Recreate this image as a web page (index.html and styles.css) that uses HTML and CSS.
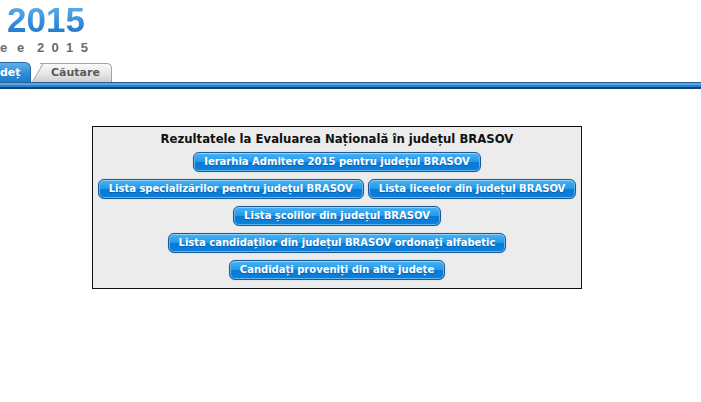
FILE: index.html
```html
<!DOCTYPE html>
<html lang="ro">
<head>
<meta charset="utf-8">
<title>Evaluare Națională 2015</title>
<link rel="stylesheet" href="styles.css">
</head>
<body>
<header class="masthead">
  <div class="year">2015</div>
  <div class="sub"><span class="sub-a">ee</span><span class="sub-b">2015</span></div>
</header>
<nav class="tabs">
  <a class="tab tab-active">deț</a>
  <a class="tab tab-inactive"><span class="tab-label">Căutare</span></a>
</nav>
<div class="tabbar"></div>
<main class="panel">
  <div class="panel-title">Rezultatele la Evaluarea Națională în județul BRASOV</div>
  <div class="rows">
    <div class="row"><a class="btn">Ierarhia Admitere 2015 pentru județul BRASOV</a></div>
    <div class="row"><a class="btn">Lista specializărilor pentru județul BRASOV</a><a class="btn">Lista liceelor din județul BRASOV</a></div>
    <div class="row"><a class="btn">Lista școlilor din județul BRASOV</a></div>
    <div class="row"><a class="btn">Lista candidaților din județul BRASOV ordonați alfabetic</a></div>
    <div class="row"><a class="btn">Candidați proveniți din alte județe</a></div>
  </div>
</main>
</body>
</html>
```

FILE: styles.css
```css
html, body {
  margin: 0;
  padding: 0;
  background: #ffffff;
}
body {
  font-family: "DejaVu Sans", Verdana, sans-serif;
  width: 701px;
  overflow: hidden;
}
.masthead {
  padding-left: 7px;
}
.year {
  font-family: "Liberation Sans", Arial, sans-serif;
  font-weight: bold;
  font-size: 35px;
  line-height: normal;
  padding-right: 4px;
  background: linear-gradient(#6fb8ee, #2f8ad8 60%, #1a70c4);
  -webkit-background-clip: text;
  background-clip: text;
  color: transparent;
  width: max-content;
}
.sub {
  font-family: "Liberation Sans", Arial, sans-serif;
  font-weight: bold;
  font-size: 13px;
  line-height: normal;
  color: #6b6b6b;
  margin-left: -7px;
  display: flex;
}
.sub-a {
  letter-spacing: 9.8px;
}
.sub-b {
  margin-left: 3px;
  letter-spacing: 7.3px;
}
.tabs {
  display: flex;
  align-items: flex-end;
  margin-top: 7px;
  height: 20px;
}
.tab {
  font-size: 11px;
  font-weight: bold;
  text-decoration: none;
  box-sizing: border-box;
}
.tab-active {
  width: 31px;
  height: 20px;
  line-height: 19px;
  color: #ffffff;
  background: linear-gradient(#5db0ee, #2b8ad8 60%, #1e7ccc);
  border-top: 1px solid #2468a8;
  border-right: 1px solid #2468a8;
  border-radius: 0 6px 0 0;
  padding-left: 0;
}
.tab-inactive {
  position: relative;
  margin-left: 9px;
  width: 72px;
  height: 19px;
  line-height: 18px;
  padding-left: 11px;
  color: #5a5a5a;
  background: linear-gradient(#fafafa, #e6e6e6 55%, #cfcfcf);
  border-top: 1px solid #a3a3a3;
  border-right: 1px solid #a3a3a3;
  border-radius: 0 5px 0 0;
}
.tab-inactive::before {
  content: "";
  position: absolute;
  left: -8px;
  top: -1px;
  bottom: 0;
  width: 16px;
  background: linear-gradient(#fafafa, #e6e6e6 55%, #cfcfcf);
  border-left: 1px solid #a3a3a3;
  border-top: 1px solid #a3a3a3;
  transform: skewX(-30deg);
  transform-origin: bottom left;
}
.tab-label {
  position: relative;
}
.tabbar {
  height: 7px;
  background: linear-gradient(#2a5f90 0 1px, #5aa5e5 1px 3px, #2d80d0 3px 5px, #0c4778 5px 7px);
}
.panel {
  box-sizing: border-box;
  width: 490px;
  margin: 37px 0 0 92px;
  padding: 4px 6px 8px;
  background: #ececec;
  border: 1px solid #111111;
  display: flex;
  flex-direction: column;
  align-items: center;
}
.panel-title {
  font-size: 11.7px;
  font-weight: bold;
  line-height: 16px;
  color: #111111;
  margin-bottom: 5px;
}
.rows {
  display: flex;
  flex-direction: column;
  gap: 7px;
  width: 100%;
}
.row {
  display: flex;
  justify-content: center;
  gap: 4px;
}
.btn {
  box-sizing: border-box;
  height: 20px;
  line-height: 18px;
  padding: 0 10px;
  font-size: 10px;
  font-weight: bold;
  color: #ffffff;
  text-decoration: none;
  white-space: nowrap;
  border: 1px solid #1d5a94;
  border-radius: 6px;
  background: linear-gradient(#4ab3f3, #2198ea 50%, #0a7ad6 52%, #0b80da);
  box-shadow: inset 0 1px 0 #8ed3fb, inset 0 0 0 1px #5bb6f2, 0 0 1px #9ab;
  text-shadow: 0 1px 0 rgba(0, 40, 90, 0.35);
}
```
